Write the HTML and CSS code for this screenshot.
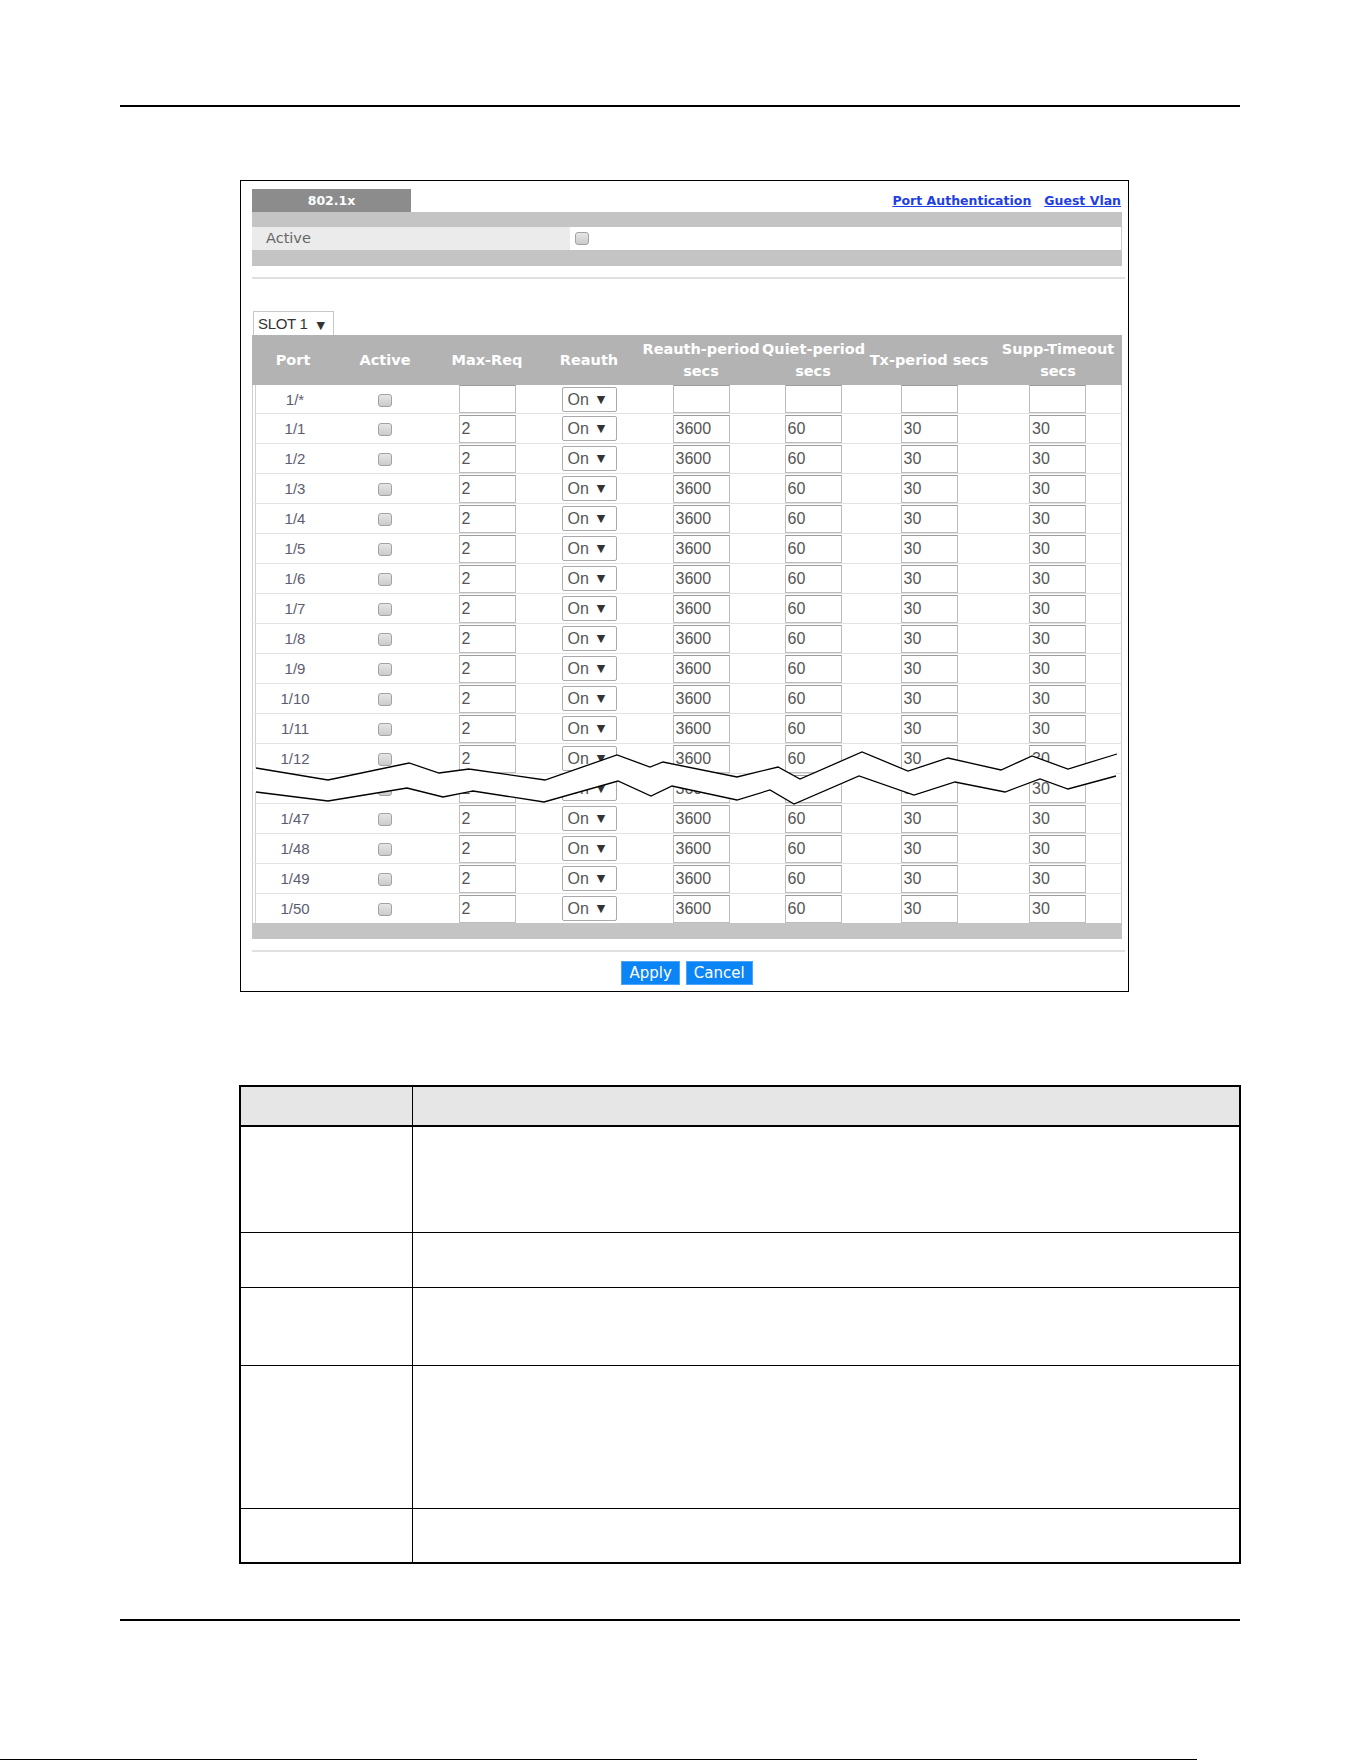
FILE: index.html
```html
<!DOCTYPE html>
<html lang="en">
<head>
    <meta charset="UTF-8">
    <meta name="viewport" content="width=device-width, initial-scale=1.0">
    <title>802.1x</title>
    <link rel="stylesheet" href="styles.css">
</head>
<body>
    <div class="page-rule top-rule"></div>

    <div class="screen">
        <div class="tab-strip">
            <div class="tab">802.1x</div>
            <div class="links">
                <a href="#">Port Authentication</a>
                <a href="#">Guest Vlan</a>
            </div>
        </div>

        <div class="settings">
            <div class="bar"></div>
            <div class="setting-row">
                <div class="setting-label">Active</div>
                <div class="setting-value"><span class="check"></span></div>
            </div>
            <div class="bar bar-low"></div>
        </div>

        <div class="divider"></div>

        <div class="slot-select">SLOT 1 <span class="arrow">&#9660;</span></div>

        <div class="port-table-wrap">
            <table class="port-table">
                <colgroup>
                    <col class="c-port">
                    <col class="c-active">
                    <col class="c-maxreq">
                    <col class="c-reauth">
                    <col class="c-rperiod">
                    <col class="c-quiet">
                    <col class="c-tx">
                    <col class="c-supp">
                </colgroup>
                <thead>
                    <tr>
                        <th>Port</th>
                        <th>Active</th>
                        <th>Max-Req</th>
                        <th>Reauth</th>
                        <th>Reauth-period<br>secs</th>
                        <th>Quiet-period<br>secs</th>
                        <th>Tx-period secs</th>
                        <th>Supp-Timeout<br>secs</th>
                    </tr>
                </thead>
                <tbody id="port-rows"></tbody>
            </table>

            <!-- cut mark: ports 1/13 to 1/46 are left out -->
            <svg class="break-mark" viewBox="0 0 870 589" width="870" height="589">
                <polygon fill="#fff" points="2,433 76,445 157,428 187,438 217,434 293,445 365,420 398,432 411,427 485,442 526,432 548,444 610,417 656,436 696,423 749,435 780,421 816,434 865,419
                    864,441 816,454 788,444 753,457 703,447 662,460 607,441 542,469 518,455 485,465 420,451 399,461 366,446 292,467 221,456 191,462 155,453 76,466 2,457"/>
                <polyline class="cut" points="4,433 76,445 157,428 187,438 217,434 293,445 365,420 398,432 411,427 485,442 526,432 548,444 610,417 656,436 696,423 749,435 780,421 816,434 865,419"/>
                <polyline class="cut" points="4,457 76,466 155,453 191,462 221,456 292,467 366,446 399,461 420,451 485,465 518,455 542,469 607,441 662,460 703,447 753,457 788,444 816,454 864,441"/>
            </svg>
        </div>

        <div class="bar bar-end"></div>
        <div class="divider"></div>

        <div class="buttons">
            <button>Apply</button>
            <button>Cancel</button>
        </div>
    </div>

    <table class="desc-table">
        <colgroup>
            <col class="d-label">
            <col>
        </colgroup>
        <thead>
            <tr><th></th><th></th></tr>
        </thead>
        <tbody>
            <tr><td></td><td></td></tr>
            <tr><td></td><td></td></tr>
            <tr><td></td><td></td></tr>
            <tr><td></td><td></td></tr>
            <tr><td></td><td></td></tr>
        </tbody>
    </table>

    <div class="page-rule bottom-rule"></div>
    <div class="next-rule"></div>

    <script>
        const portRows = document.getElementById('port-rows');
        const ports = ['1/*'];
        for (let i = 1; i <= 12; i++) ports.push('1/' + i);
        for (let i = 46; i <= 50; i++) ports.push('1/' + i);

        function field(value) {
            return `<input class="field" type="text" value="${value}">`;
        }

        ports.forEach(port => {
            const all = port === '1/*';
            const tr = document.createElement('tr');
            tr.innerHTML = `
                <td class="port">${port}</td>
                <td><span class="check"></span></td>
                <td>${field(all ? '' : '2')}</td>
                <td><div class="select-box">On<span class="arrow">&#9660;</span></div></td>
                <td>${field(all ? '' : '3600')}</td>
                <td>${field(all ? '' : '60')}</td>
                <td>${field(all ? '' : '30')}</td>
                <td>${field(all ? '' : '30')}</td>`;
            portRows.appendChild(tr);
        });
    </script>
</body>
</html>
```

FILE: styles.css
```css
body {
    margin: 0;
    background-color: #fff;
    font-family: "DejaVu Sans", sans-serif;
}

.page-rule {
    margin-left: 120px;
    width: 1120px;
    border-top: 2px solid #000;
}
.top-rule {
    margin-top: 105px;
}
.bottom-rule {
    margin-top: 55px;
}
.next-rule {
    margin-top: 138px;
    width: 1197px;
    border-top: 1px solid #000;
}

/* web ui frame */
.screen {
    box-sizing: border-box;
    width: 889px;
    margin: 73px 0 0 240px;
    padding: 8px 6px 6px 11px;
    border: 1px solid #000;
}

.tab-strip {
    display: flex;
    justify-content: space-between;
    align-items: center;
    height: 23px;
}
.tab {
    width: 159px;
    height: 23px;
    line-height: 23px;
    background-color: #8c8c8c;
    color: #fff;
    font-size: 12.5px;
    font-weight: bold;
    text-align: center;
}
.links {
    display: flex;
    gap: 13px;
    padding-right: 1px;
}
.links a {
    color: #1f3fe4;
    font-size: 12.5px;
    font-weight: bold;
}

.bar {
    height: 15px;
    background-color: #c4c4c4;
}
.bar-low {
    height: 16px;
}
.bar-end {
    height: 16px;
}

.setting-row {
    display: flex;
    height: 23px;
}
.setting-label {
    width: 304px;
    padding-left: 14px;
    line-height: 23px;
    background-color: #ebebeb;
    color: #666;
    font-size: 14.5px;
}
.setting-value {
    flex: 1;
    display: flex;
    align-items: center;
    padding-left: 5px;
    border-right: 1px solid #ccc;
}

.check {
    display: inline-block;
    box-sizing: border-box;
    width: 14px;
    height: 13px;
    border: 1px solid #a2a2a2;
    border-radius: 3px;
    background: linear-gradient(#e6e6e6, #cbcbcb);
    vertical-align: middle;
}

.divider {
    height: 2px;
    margin: 11px -3px 0 0;
    background-color: #e0e0e0;
}

.slot-select {
    box-sizing: border-box;
    width: 81px;
    height: 24px;
    margin: 32px 0 0 1px;
    padding-left: 4px;
    border: 1px solid #c8c8c8;
    border-bottom: none;
    line-height: 23px;
    color: #333;
    font-family: "Liberation Sans", sans-serif;
    font-size: 15px;
    letter-spacing: -0.3px;
}
.slot-select .arrow {
    margin-left: 5px;
    font-family: "DejaVu Sans", sans-serif;
    font-size: 11px;
}

/* port table */
.port-table-wrap {
    position: relative;
}
.port-table {
    width: 870px;
    table-layout: fixed;
    border-collapse: separate;
    border-spacing: 0;
}
.c-port { width: 82px; }
.c-active { width: 102px; }
.c-maxreq { width: 102px; }
.c-reauth { width: 102px; }
.c-rperiod { width: 122px; }
.c-quiet { width: 102px; }
.c-tx { width: 130px; }
.c-supp { width: 128px; }

.port-table th {
    height: 50px;
    padding: 0;
    background-color: #b3b3b3;
    color: #fff;
    font-size: 14.5px;
    font-weight: bold;
    line-height: 22px;
    white-space: nowrap;
}
.port-table td {
    height: 29px;
    padding: 0;
    text-align: center;
    vertical-align: middle;
    border-top: 1px solid #e2e2e2;
}
.port-table tbody tr:first-child td {
    height: 28px;
    border-top: none;
}
.port-table tbody tr:first-child .field {
    margin-top: 0;
}
.port-table tbody tr:first-child .select-box {
    margin: 2px auto 1px;
}
.port-table td:first-child {
    border-left: 4px double #d2d2d2;
}
.port-table td:last-child {
    border-right: 1px solid #ccc;
}
.port-table .port {
    color: #5c5c70;
    font-family: "Liberation Sans", sans-serif;
    font-size: 15px;
}

.field {
    display: block;
    box-sizing: border-box;
    width: 57px;
    height: 28px;
    margin: 1px auto 0;
    padding: 0 2px;
    border: 1px solid #bdbdbd;
    border-top-color: #9c9c9c;
    color: #555;
    font-family: "Liberation Sans", sans-serif;
    font-size: 16px;
}

.select-box {
    display: flex;
    align-items: center;
    box-sizing: border-box;
    width: 55px;
    height: 25px;
    margin: 2px auto 2px;
    padding-left: 5px;
    border: 1px solid #aaa;
    border-radius: 2px;
    color: #555;
    font-family: "Liberation Sans", sans-serif;
    font-size: 16px;
}
.select-box .arrow {
    margin-left: 8px;
    color: #333;
    font-family: "DejaVu Sans", sans-serif;
    font-size: 11px;
}

.break-mark {
    position: absolute;
    left: 0;
    top: 0;
    pointer-events: none;
}
.break-mark .cut {
    fill: none;
    stroke: #000;
    stroke-width: 1.3;
}

.buttons {
    display: flex;
    justify-content: center;
    gap: 6px;
    margin-top: 9px;
}
.buttons button {
    height: 24px;
    padding: 0 7px;
    border: 1px solid #4ea4f6;
    background-color: #0b84f5;
    color: #fff;
    font-family: "DejaVu Sans", sans-serif;
    font-size: 15px;
}

/* field description table */
.desc-table {
    width: 1002px;
    margin: 93px 0 0 239px;
    border-collapse: collapse;
    border: 2px solid #000;
}
.d-label {
    width: 172px;
}
.desc-table th {
    height: 38px;
    padding: 0;
    background-color: #e6e6e6;
    border: 1px solid #000;
    border-bottom: 2px solid #000;
}
.desc-table td {
    padding: 0;
    border: 1px solid #000;
}
.desc-table tbody tr:nth-child(1) { height: 106px; }
.desc-table tbody tr:nth-child(2) { height: 55px; }
.desc-table tbody tr:nth-child(3) { height: 78px; }
.desc-table tbody tr:nth-child(4) { height: 143px; }
.desc-table tbody tr:nth-child(5) { height: 55px; }
```
